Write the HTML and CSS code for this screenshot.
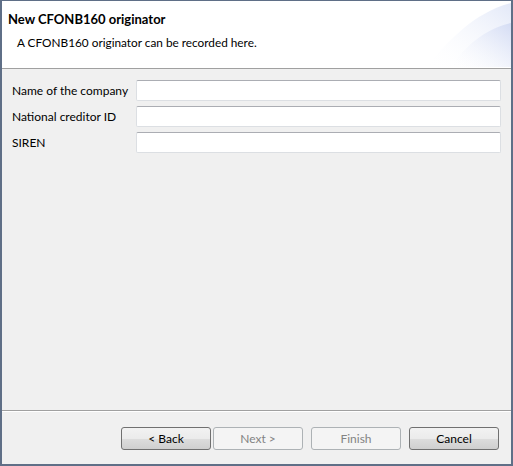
FILE: index.html
```html
<!DOCTYPE html>
<html lang="en">
<head>
    <meta charset="UTF-8">
    <title>New CFONB160 originator</title>
    <link rel="stylesheet" href="styles.css">
</head>
<body>
    <div class="window">
        <div class="banner">
            <div class="banner-text">
                <h1>New CFONB160 originator</h1>
                <p>A CFONB160 originator can be recorded here.</p>
            </div>
            <svg class="banner-art" width="120" height="66" viewBox="0 0 120 66">
                <defs>
                    <linearGradient id="g1" x1="0" y1="1" x2="1" y2="0">
                        <stop offset="0" stop-color="#ffffff" stop-opacity="0"/>
                        <stop offset="1" stop-color="#e2e8f8"/>
                    </linearGradient>
                    <linearGradient id="g2" x1="0" y1="1" x2="1" y2="0">
                        <stop offset="0" stop-color="#ffffff" stop-opacity="0"/>
                        <stop offset="1" stop-color="#d4dcf4"/>
                    </linearGradient>
                </defs>
                <path d="M35 66 C 58 40, 82 12, 120 2 L120 66 Z" fill="url(#g1)"/>
                <path d="M60 66 C 74 45, 94 28, 120 22 L120 66 Z" fill="url(#g2)"/>
            </svg>
        </div>

        <div class="content">
            <div class="form-row">
                <label for="company">Name of the company</label>
                <input type="text" id="company">
            </div>
            <div class="form-row">
                <label for="creditor">National creditor ID</label>
                <input type="text" id="creditor">
            </div>
            <div class="form-row">
                <label for="siren">SIREN</label>
                <input type="text" id="siren">
            </div>
        </div>

        <div class="button-bar">
            <button class="btn">&lt; Back</button>
            <button class="btn" disabled>Next &gt;</button>
            <button class="btn gap" disabled>Finish</button>
            <button class="btn gap">Cancel</button>
        </div>
    </div>
</body>
</html>
```

FILE: styles.css
```css
* {
    margin: 0;
    padding: 0;
    box-sizing: border-box;
}

body {
    font-family: Lato, "Open Sans", sans-serif;
    font-size: 12px;
    color: #000;
    background: #f0f0f0;
}

.window {
    width: 513px;
    height: 466px;
    display: flex;
    flex-direction: column;
    border: 2px solid #5f6f87;
    border-top-width: 1px;
    background: #f0f0f0;
}

.banner {
    height: 68px;
    display: flex;
    justify-content: space-between;
    background: white;
    border-bottom: 1px solid #a0a0a0;
    flex-shrink: 0;
}

.banner-text h1 {
    font-size: 13px;
    font-weight: 700;
    padding: 10px 0 0 6px;
    line-height: 17px;
}

.banner-text p {
    font-size: 11.8px;
    padding: 6px 0 0 15px;
    line-height: 17px;
}

.banner-art {
    align-self: stretch;
}

.content {
    flex: 1;
    padding: 11px 10px 0 10px;
    display: flex;
    flex-direction: column;
    gap: 5px;
    border-bottom: 1px solid #a0a0a0;
}

.form-row {
    display: flex;
    align-items: center;
    gap: 5px;
}

.form-row label {
    width: 119px;
    line-height: 16px;
    white-space: nowrap;
}

.form-row input {
    flex: 1;
    height: 21px;
    border: 1px solid #dcdfe3;
    border-top-color: #abadb3;
    border-radius: 2px;
    background: white;
    font: inherit;
}

.button-bar {
    height: 53px;
    flex-shrink: 0;
    display: flex;
    justify-content: flex-end;
    align-items: flex-start;
    padding: 15px 12px 0 0;
    gap: 2px;
    border-top: 1px solid white;
}

.btn {
    width: 90px;
    height: 23px;
    font: inherit;
    border: 1px solid #707070;
    border-radius: 3px;
    background: linear-gradient(#f2f2f2 0%, #ebebeb 50%, #dddddd 51%, #cfcfcf 100%);
    color: #000;
}

.btn:disabled {
    border-color: #adb2b5;
    background: #f4f4f4;
    color: #838383;
}

.btn.gap {
    margin-left: 6px;
}
```
